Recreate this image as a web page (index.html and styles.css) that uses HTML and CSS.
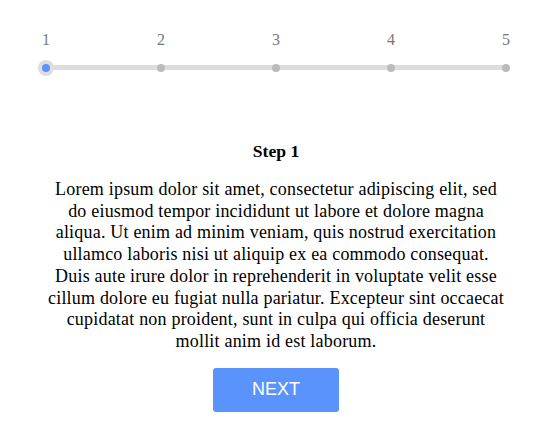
FILE: index.html
```html
<!DOCTYPE html>
<html>
<head>
<meta charset="utf-8">
<link rel="stylesheet" href="styles.css">
</head>
<body>
<div class="wrap">
  <div class="stepper">
    <div class="labels">
      <span>1</span><span>2</span><span>3</span><span>4</span><span>5</span>
    </div>
    <div class="track">
      <span class="dot active"></span><span class="dot"></span><span class="dot"></span><span class="dot"></span><span class="dot"></span>
    </div>
  </div>
  <div class="content">
    <h2 class="title">Step 1</h2>
    <p class="text">Lorem ipsum dolor sit amet, consectetur adipiscing elit, sed do eiusmod tempor incididunt ut labore et dolore magna aliqua. Ut enim ad minim veniam, quis nostrud exercitation ullamco laboris nisi ut aliquip ex ea commodo consequat. Duis aute irure dolor in reprehenderit in voluptate velit esse cillum dolore eu fugiat nulla pariatur. Excepteur sint occaecat cupidatat non proident, sunt in culpa qui officia deserunt mollit anim id est laborum.</p>
    <button class="next">NEXT</button>
  </div>
</div>
</body>
</html>
```
FILE: styles.css
```css
html, body { margin: 0; padding: 0; background: #fff; }
body { font-family: "Liberation Serif", "Times New Roman", serif; color: #000; }
.wrap { width: 460px; margin: 0 auto; padding-top: 31px; }
.stepper { width: 460px; }
.labels { display: flex; justify-content: space-between; margin: 0 -10px; }
.labels span { width: 20px; text-align: center; font-size: 16px; line-height: 18px; color: #777; }
.track { position: relative; height: 5px; background: #dcdcdc; border-radius: 3px; margin-top: 16px; display: flex; justify-content: space-between; align-items: center; }
.dot { width: 8px; height: 8px; border-radius: 50%; background: #bbb; margin: 0 -4px; }
.dot.active { background: #5b93fc; box-shadow: 0 0 0 4px #dedede; }
.content { text-align: center; margin-top: 71px; }
.title { font-size: 17.6px; font-weight: bold; margin: 0; line-height: 20px; }
.text { font-size: 18px; line-height: 21.7px; letter-spacing: 0.2px; margin: 18px 0 0; }
.next { margin-top: 15px; width: 126px; height: 44px; background: #5b93fc; color: #fff; border: none; border-radius: 3px; font-family: "Liberation Sans", Arial, sans-serif; font-size: 18px; cursor: pointer; }
```
